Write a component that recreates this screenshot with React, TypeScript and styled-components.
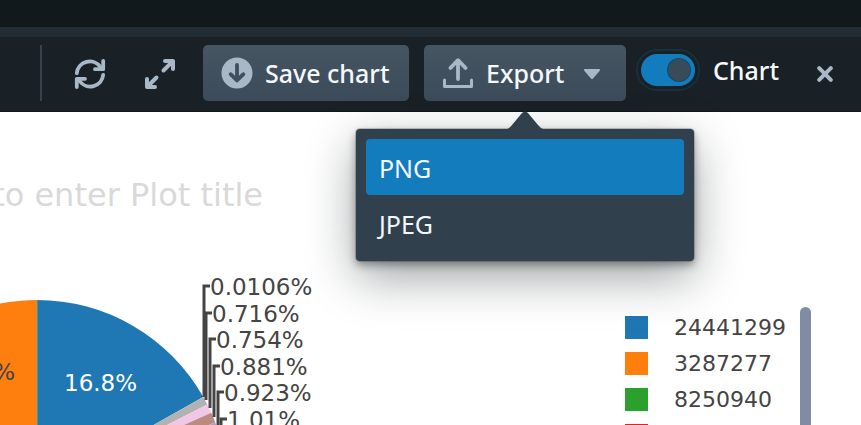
import React from "react";
import styled, { createGlobalStyle } from "styled-components";

const uiFont = `"Noto Sans", "Open Sans", sans-serif`;
const plotFont = `"DejaVu Sans", Verdana, sans-serif`;

const GlobalStyle = createGlobalStyle`
  * { box-sizing: border-box; }
  body { margin: 0; background: #fff; font-family: ${uiFont}; }
  button { font: inherit; }
`;

const Page = styled.div`
  display: flex;
  flex-direction: column;
  height: 100vh;
  overflow: hidden;
`;

const TopStrip = styled.div`
  flex: none;
  height: 27px;
  background: #11191c;
`;

const Toolbar = styled.header`
  flex: none;
  display: flex;
  align-items: center;
  justify-content: flex-end;
  padding: 8px 24px 10px 0;
  border-top: 10px solid #222c35;
  border-bottom: 1px solid #10161a;
  background: #192026;
`;

const Divider = styled.div`
  width: 2px;
  height: 56px;
  margin-right: 28px;
  background: #36424c;
`;

const IconButton = styled.button<{ $gap: number }>`
  display: flex;
  padding: 4px;
  margin-top: 2px;
  margin-right: ${(p) => p.$gap}px;
  border: 0;
  background: transparent;
  color: #a9b8c6;
`;

const TextButton = styled.button<{ $gap: number; $width: number }>`
  display: flex;
  align-items: center;
  width: ${(p) => p.$width}px;
  height: 56px;
  padding: 0 18px;
  margin-right: ${(p) => p.$gap}px;
  border: 0;
  border-radius: 5px;
  background: linear-gradient(#455562, #3b4b59);
  color: #f5f8fa;
  font-size: 25px;
  font-weight: 500;
  line-height: 32px;
  white-space: nowrap;

  svg { flex: none; color: #a9b8c6; }
  span { margin-left: 12px; }
  svg:last-child { margin-left: auto; margin-right: 7px; }
`;

const MenuAnchor = styled.div`
  position: relative;
`;

const Popover = styled.div`
  position: absolute;
  z-index: 1;
  top: 84px;
  left: 101px;
  width: 338px;
  margin-left: -169px;
  padding: 10px;
  border-radius: 4px;
  background: #30404d;
  box-shadow: 0 0 0 1px rgba(16, 22, 26, 0.2), 0 4px 8px rgba(16, 22, 26, 0.4),
    0 16px 48px rgba(16, 22, 26, 0.4);
`;

const Arrow = styled.svg`
  position: absolute;
  top: -19px;
  left: 149px;
`;

const MenuList = styled.ul`
  margin: 0;
  padding: 0;
  list-style: none;
`;

const MenuItem = styled.button<{ $active?: boolean }>`
  display: block;
  width: 100%;
  height: 56px;
  padding: 2px 13px 0;
  border: 0;
  border-radius: 4px;
  background: ${(p) => (p.$active ? "#137cbd" : "transparent")};
  color: #f5f8fa;
  font-size: 25px;
  line-height: 32px;
  text-align: left;
`;

const Toggle = styled.label`
  display: flex;
  align-items: center;
  gap: 18px;
  margin-bottom: 6px;
  color: #f5f8fa;
  font-size: 25px;
  font-weight: 500;
  line-height: 32px;
`;

const ToggleInput = styled.input`
  appearance: none;
  display: flex;
  align-items: center;
  justify-content: flex-end;
  width: 54px;
  height: 32px;
  margin: 0;
  padding: 5px;
  border-radius: 16px;
  outline: 2px solid #17303e;
  outline-offset: 3px;
  background: #137cbd;

  &::before {
    content: "";
    width: 22px;
    height: 22px;
    border-radius: 50%;
    background: #394b59;
    box-shadow: 0 0 0 1px rgba(16, 40, 60, 0.6);
  }
`;

const Spacer = styled.div`
  width: 34px;
`;

const Plot = styled.main`
  flex: 1;
  min-height: 0;
  background: #fff;
`;

const TitleRow = styled.div`
  display: flex;
  justify-content: flex-end;
  width: 263px;
  height: 150px;
  padding-top: 63px;
  overflow: hidden;
`;

const PlotTitle = styled.h1`
  margin: 0;
  color: #d9d9d9;
  font: 400 32px/40px ${plotFont};
  white-space: nowrap;
`;

const PlotBody = styled.div`
  display: flex;
  justify-content: space-between;
  padding-right: 50px;
`;

const PieChart = styled.svg`
  display: block;
  font-family: ${plotFont};
  font-size: 23px;
`;

const LegendArea = styled.div`
  display: flex;
  padding-top: 45px;
`;

const LegendList = styled.ul`
  width: 175px;
  margin: 0;
  padding: 2px 0 0;
  list-style: none;
`;

const LegendItem = styled.li`
  display: flex;
  align-items: center;
  gap: 26px;
  height: 36px;
  color: #444;
  font: 22px/36px ${plotFont};
`;

const LegendLabel = styled.span`
  padding-top: 2px;
`;

const Swatch = styled.span<{ $color: string }>`
  width: 23px;
  height: 23px;
  background: ${(p) => p.$color};
`;

const ScrollThumb = styled.div`
  width: 11px;
  height: 200px;
  border-radius: 6px;
  background: #808ba4;
`;

const cx = 37;
const cy = 491;
const radius = 191;

const slices = [
  { value: 16.8, color: "#1f77b4" },
  { value: 0.0106, color: "#bcbd22" },
  { value: 0.716, color: "#b2b2b2" },
  { value: 0.754, color: "#f2c7e5" },
  { value: 0.881, color: "#ba8b80" },
  { value: 0.923, color: "#b79ad0" },
  { value: 1.01, color: "#d62728" },
];

const callouts = [
  { text: "0.0106%", x: 204, y: 286, end: 397 },
  { text: "0.716%", x: 206, y: 313, end: 400 },
  { text: "0.754%", x: 210, y: 339, end: 408 },
  { text: "0.881%", x: 214, y: 366, end: 417 },
  { text: "0.923%", x: 218, y: 392, end: 428 },
  { text: "1.01%", x: 221, y: 419, end: 430 },
];

const legend = [
  { label: "24441299", color: "#1f77b4" },
  { label: "3287277", color: "#ff7f0e" },
  { label: "8250940", color: "#2ca02c" },
  { label: "", color: "#d62728" },
];

function wedge(from: number, to: number) {
  const point = (percent: number) => {
    const a = (percent / 100) * 2 * Math.PI;
    return `${cx + radius * Math.sin(a)} ${cy - radius * Math.cos(a)}`;
  };
  return `M${cx} ${cy}L${point(from)}A${radius} ${radius} 0 0 1 ${point(to)}Z`;
}

function Pie() {
  let total = 0;
  return (
    <PieChart width="340" height="163" viewBox="0 262 340 163" role="img" aria-label="Pie chart">
      <path d={wedge(-25, 0)} fill="#ff7f0e" />
      {slices.map((s) => {
        const from = total;
        total += s.value;
        return <path key={s.color} d={wedge(from, total)} fill={s.color} />;
      })}
      <path d={`M${cx} 300V425`} stroke="#a09c70" strokeWidth="1" />
      <text x="15" y="380" textAnchor="end" fill="#444">%</text>
      <text x="64" y="391" fill="#fff">16.8%</text>
      {callouts.map((c) => (
        <g key={c.text}>
          <path d={`M${c.x} ${c.end}V${c.y}h6`} fill="none" stroke="#444" strokeWidth="3" />
          <text x={c.x + 6} y={c.y + 9} fill="#444">{c.text}</text>
        </g>
      ))}
    </PieChart>
  );
}

const RefreshIcon = () => (
  <svg width="32" height="32" viewBox="0 0 32 32" fill="none" stroke="currentColor" strokeWidth="3.8" strokeLinecap="round" strokeLinejoin="round" aria-hidden="true">
    <path d="M2.8 15.2A13 13 0 0 1 26.4 9M29.2 16.8A13 13 0 0 1 5.6 23" />
    <path d="M29.2 3V11.2H21M2.8 29V20.8H11" />
    <path d="M25.5 11L29 7.5V11ZM6.5 21L3 24.5V21Z" fill="currentColor" strokeWidth="1" />
  </svg>
);

const ExpandIcon = () => (
  <svg width="32" height="32" viewBox="0 0 32 32" fill="none" stroke="currentColor" strokeWidth="4" strokeLinecap="round" strokeLinejoin="round" aria-hidden="true">
    <path d="M19.5 12.5L28 4M21 3H29V11M12.5 19.5L4 28M3 21V29H11" />
    <path d="M25 4H28V7ZM4 25V28H7Z" fill="currentColor" strokeWidth="2" />
  </svg>
);

const SaveIcon = () => (
  <svg width="32" height="32" viewBox="0 0 32 32" aria-hidden="true">
    <circle cx="16" cy="16" r="15.5" fill="currentColor" />
    <path d="M16 8V22M9.6 17.2L16 23.4L22.4 17.2" fill="none" stroke="#3f4f5d" strokeWidth="3.8" strokeLinecap="round" strokeLinejoin="round" />
  </svg>
);

const ExportIcon = () => (
  <svg width="32" height="32" viewBox="0 0 32 32" fill="none" stroke="currentColor" strokeLinecap="round" strokeLinejoin="round" aria-hidden="true">
    <path d="M16 22V4M8.4 11L16 3.2L23.6 11" strokeWidth="3.8" />
    <path d="M2.5 23V29.5H29.5V23" strokeWidth="3" />
  </svg>
);

const CaretIcon = () => (
  <svg width="18" height="12" viewBox="0 0 18 12" aria-hidden="true">
    <path d="M2 3H16L9 11Z" fill="currentColor" stroke="currentColor" strokeWidth="2" strokeLinejoin="round" />
  </svg>
);

const CloseIcon = () => (
  <svg width="16" height="16" viewBox="0 0 16 16" aria-hidden="true">
    <path d="M2.2 2.2L13.8 13.8M13.8 2.2L2.2 13.8" stroke="currentColor" strokeWidth="4" strokeLinecap="round" />
  </svg>
);

export default function App() {
  return (
    <Page>
      <GlobalStyle />
      <TopStrip />
      <Toolbar>
        <Divider />
        <IconButton $gap={30} aria-label="Refresh"><RefreshIcon /></IconButton>
        <IconButton $gap={23} aria-label="Expand"><ExpandIcon /></IconButton>
        <TextButton $gap={15} $width={206}>
          <SaveIcon />
          <span>Save chart</span>
        </TextButton>
        <MenuAnchor>
          <TextButton $gap={15} $width={202} aria-haspopup="menu" aria-expanded="true">
            <ExportIcon />
            <span>Export</span>
            <CaretIcon />
          </TextButton>
          <Popover>
            <Arrow width="40" height="20" viewBox="0 0 40 20" aria-hidden="true">
              <path d="M0 20Q4 19 7 15L17 3Q20 0 23 3L33 15Q36 19 40 20Z" fill="#30404d" />
            </Arrow>
            <MenuList>
              <li><MenuItem $active>PNG</MenuItem></li>
              <li><MenuItem>JPEG</MenuItem></li>
            </MenuList>
          </Popover>
        </MenuAnchor>
        <Toggle>
          <ToggleInput type="checkbox" defaultChecked />
          Chart
        </Toggle>
        <Spacer />
        <IconButton $gap={0} aria-label="Close"><CloseIcon /></IconButton>
      </Toolbar>
      <Plot>
        <TitleRow>
          <PlotTitle>to enter Plot title</PlotTitle>
        </TitleRow>
        <PlotBody>
          <Pie />
          <LegendArea>
            <LegendList>
              {legend.map((l) => (
                <LegendItem key={l.color}>
                  <Swatch $color={l.color} />
                  <LegendLabel>{l.label}</LegendLabel>
                </LegendItem>
              ))}
            </LegendList>
            <ScrollThumb />
          </LegendArea>
        </PlotBody>
      </Plot>
    </Page>
  );
}
